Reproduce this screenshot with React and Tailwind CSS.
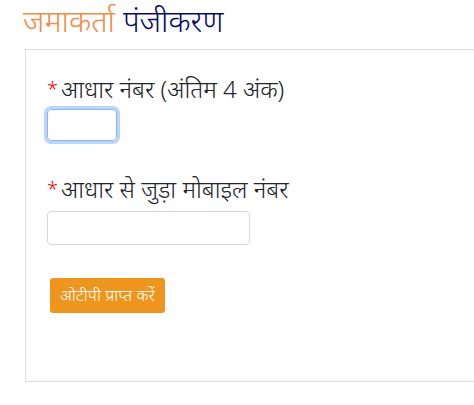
export default function App() {
  return (
    <div className="w-[474px] h-[405px] bg-white overflow-hidden" style={{ fontFamily: '"Noto Sans", "Noto Sans Devanagari", sans-serif' }}>
      <h1 className="pl-[23px] text-[30.5px] leading-[40px] font-light whitespace-nowrap">
        <span className="text-[#ee8f47]">जमाकर्ता</span> <span className="text-[#0b0b6e]">पंजीकरण</span>
      </h1>
      <div className="ml-[25px] mt-[9px] w-[460px] h-[333px] border border-[#dddddd] pl-[21px] pt-[24px]">
        <label className="flex items-center text-[24px] leading-[29px] font-light text-[#212529]">
          <span className="text-[#ff0000] mr-[3px] text-[20px]">*</span>आधार नंबर (अंतिम 4 अंक)
        </label>
        <div className="mt-[6px] w-[70px] h-[32px] rounded-[4px] border border-[#8ab4f8] shadow-[0_0_0_3px_#bcd5fb]"></div>
        <label className="mt-[33px] flex items-center text-[24px] leading-[29px] font-light text-[#212529]">
          <span className="text-[#ff0000] mr-[3px] text-[20px]">*</span>आधार से जुड़ा मोबाइल नंबर
        </label>
        <div className="mt-[8px] w-[203px] h-[34px] rounded-[4px] border border-[#d4d8de]"></div>
        <button className="mt-[33px] ml-[3px] w-[115px] h-[35px] rounded-[3px] bg-[#ee951e] text-white text-[16.5px] font-light">
          ओटीपी प्राप्त करें
        </button>
      </div>
    </div>
  );
}
